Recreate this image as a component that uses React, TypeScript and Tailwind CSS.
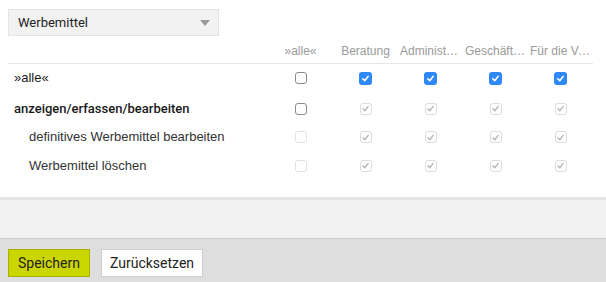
import React from "react";

type Box = "on" | "off" | "disOn" | "disOff";

const columns = ["»alle«", "Beratung", "Administration", "Geschäftsleitung", "Für die Verwaltung"];

const rows: { label: string; level: number; bold?: boolean; boxes: Box[] }[] = [
    { label: "»alle«", level: 0, boxes: ["off", "on", "on", "on", "on"] },
    { label: "anzeigen/erfassen/bearbeiten", level: 0, bold: true, boxes: ["off", "disOn", "disOn", "disOn", "disOn"] },
    { label: "definitives Werbemittel bearbeiten", level: 1, boxes: ["disOff", "disOn", "disOn", "disOn", "disOn"] },
    { label: "Werbemittel löschen", level: 1, boxes: ["disOff", "disOn", "disOn", "disOn", "disOn"] },
];

const rowHeights = ["h-[28px]", "h-[31px] pt-[2px]", "h-[28px]", "h-[29px]"];

function Check({ state }: { state: Box }) {
    if (state === "on") {
        return (
            <span className="w-[13px] h-[13px] rounded-[3px] bg-[#2f88f7] flex items-center justify-center">
                <svg width="9" height="9" viewBox="0 0 10 10" fill="none">
                    <path d="M2 5.4 L4.2 7.5 L8 2.6" stroke="white" strokeWidth="1.7" strokeLinecap="round" strokeLinejoin="round" />
                </svg>
            </span>
        );
    }
    if (state === "disOn") {
        return (
            <span className="w-[12px] h-[12px] rounded-[3px] border border-[#dcdcdc] bg-white flex items-center justify-center">
                <svg width="9" height="9" viewBox="0 0 10 10" fill="none">
                    <path d="M2 5.4 L4.2 7.5 L8 2.6" stroke="#b5b5b5" strokeWidth="1.5" strokeLinecap="round" strokeLinejoin="round" />
                </svg>
            </span>
        );
    }
    if (state === "disOff") {
        return <span className="w-[12px] h-[12px] rounded-[3px] border border-[#e2e2e2] bg-white" />;
    }
    return <span className="w-[12px] h-[12px] rounded-[3px] border border-[#8a8a8a] bg-white" />;
}

export default function App() {
    return (
        <div className="w-[606px] h-[282px] flex flex-col bg-white overflow-hidden" style={{ fontFamily: '"Liberation Sans", Arial, sans-serif' }}>
            <div className="flex-1 flex flex-col px-2 pt-[9px]">
                {/* Select */}
                <div className="w-[211px] h-[27px] bg-[#f2f2f2] border border-[#e4e4e4] flex items-center justify-between pl-[9px] pr-[8px]">
                    <span className="text-[13px] text-[#222]" style={{ fontFamily: "Roboto, sans-serif" }}>Werbemittel</span>
                    <svg width="10" height="6" viewBox="0 0 10 6">
                        <path d="M0 0 H10 L5 6 Z" fill="#9a9a9a" />
                    </svg>
                </div>

                {/* Table */}
                <div className="w-[585px]">
                    <div className="flex h-[28px] items-center border-b border-[#e6e6e6]">
                        <div className="w-[260px]" />
                        {columns.map((c) => (
                            <div key={c} className="w-[65px] px-[2px] text-center text-[12px] text-[#9a9a9a] truncate pt-[3px]">
                                {c}
                            </div>
                        ))}
                    </div>
                    {rows.map((r, i) => (
                        <div key={r.label} className={`flex items-center ${rowHeights[i]}`}>
                            <div
                                className={`w-[260px] text-[13px] ${r.level ? "pl-[21px] text-[#333]" : "pl-[6px] text-[#1a1a1a]"} ${r.bold ? "font-medium" : ""}`}
                                style={r.bold ? { fontFamily: "Roboto, sans-serif" } : undefined}
                            >
                                {r.label}
                            </div>
                            {r.boxes.map((b, j) => (
                                <div key={j} className="w-[65px] flex justify-center">
                                    <Check state={b} />
                                </div>
                            ))}
                        </div>
                    ))}
                </div>
            </div>

            <div className="h-[42px] bg-[#f2f2f2] border-t-[3px] border-[#e4e4e4] border-b border-b-[#d0d0d0]" />

            <div className="h-[43px] bg-[#dedede] flex items-start gap-[11px] px-2 pt-[10px]" style={{ fontFamily: "Roboto, sans-serif" }}>
                <button className="h-[28px] w-[82px] bg-[#cbd600] border border-[#a8b200] text-[14px] text-[#222]">
                    Speichern
                </button>
                <button className="h-[28px] w-[102px] bg-white border border-[#cfcfcf] text-[14px] text-[#222]">
                    Zurücksetzen
                </button>
            </div>
        </div>
    );
}
